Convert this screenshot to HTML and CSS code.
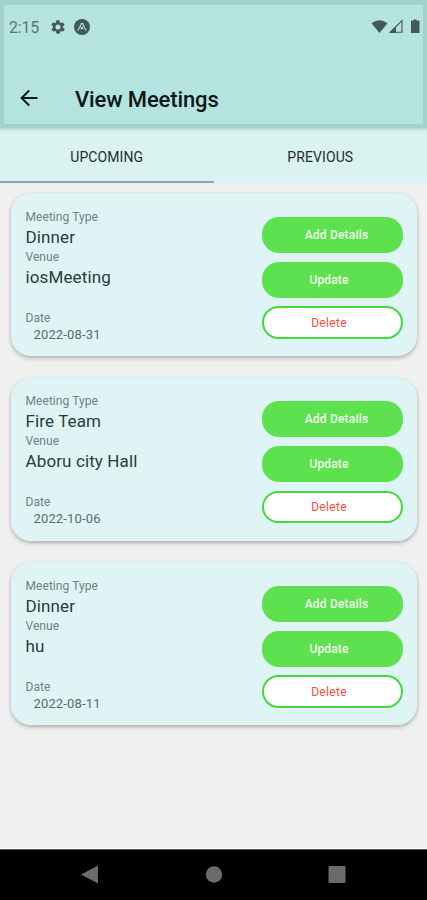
FILE: index.html
```html
<!DOCTYPE html>
<html lang="en">
<head>
<meta charset="utf-8">
<title>View Meetings</title>
<link rel="stylesheet" href="styles.css">
</head>
<body>
<div class="screen">
  <header class="header">
    <div class="status">
      <span class="clock">2:15</span>
      <svg class="gear" width="16" height="16" viewBox="0 0 24 24"><path fill-rule="evenodd" d="M19.4 13c0-.3.1-.7.1-1s0-.7-.1-1l2.100-1.600c.2-.2.3-.4.100-.7l-2-3.400c-.1-.2-.4-.3-.6-.2l-2.500 1c-.5-.4-1.100-.7-1.700-1l-.4-2.600c0-.3-.2-.5-.5-.5h-4c-.2 0-.5.2-.5.4l-.4 2.700c-.6.2-1.100.6-1.700 1l-2.500-1c-.2-.1-.5 0-.6.2l-2 3.400c-.1.200 0 .5.100.700L4.600 11c0 .3-.1.700-.1 1s0 .700.100 1l-2.100 1.600c-.2.200-.3.400-.1.700l2 3.400c.1.200.4.300.600.200l2.500-1c.5.400 1.100.700 1.700 1l.4 2.600c0 .3.200.500.500.500h4c.200 0 .500-.2.500-.4l.400-2.700c.6-.2 1.100-.6 1.700-1l2.500 1c.2.100.500 0 .600-.2l2-3.400c.1-.2 0-.500-.1-.700zM12 8.200a3.800 3.800 0 1 0 0 7.600 3.800 3.800 0 0 0 0-7.600z"/></svg>
      <svg class="expo" width="16" height="16" viewBox="0 0 16 16"><circle cx="8" cy="8" r="8"/><path d="M3.700 11.500Q6.300 8 7.300 4.700h1.400Q9.700 8 12.300 11.500M6.800 10.200Q7.700 9 8 7.800Q8.300 9 9.200 10.200" fill="none" stroke="#b5e3e0" stroke-width="1.200"/></svg>
      <svg class="signals" width="49" height="16" viewBox="0 0 49 16"><path d="M.5 4.200Q8.500-1.500 16.500 4.200L8.500 14z"/><path d="M31 1.500V13.300H19.200z" fill="none" stroke="#42585a" stroke-width="1.100"/><path d="M18.500 14 25 7.500V14z"/><path d="M40.500 1.500h2V.5h3v1H48q.5 0 .5.500v11.500q0 .5-.5.500h-7.500q-.5 0-.5-.5V2q0-.5.500-.5z"/></svg>
    </div>
    <div class="title-row">
      <svg class="back" width="18" height="18" viewBox="0 0 18 18"><path d="M17.500 9H2M9.200 1.500 1.600 9l7.600 7.500" fill="none" stroke="#0b1718" stroke-width="1.900"/></svg>
      <h1>View Meetings</h1>
    </div>
  </header>
  <nav class="tabs">
    <div class="tab active"><span>UPCOMING</span></div>
    <div class="tab"><span>PREVIOUS</span></div>
  </nav>
  <main class="list">
    <article class="card">
      <div class="info">
        <div class="label">Meeting Type</div><div class="value">Dinner</div>
        <div class="label">Venue</div><div class="value">iosMeeting</div>
        <div class="label date-label">Date</div><div class="date">2022-08-31</div>
      </div>
      <div class="actions">
        <button class="add">Add Details</button><button>Update</button><button class="delete">Delete</button>
      </div>
    </article>
    <article class="card">
      <div class="info">
        <div class="label">Meeting Type</div><div class="value">Fire Team</div>
        <div class="label">Venue</div><div class="value">Aboru city Hall</div>
        <div class="label date-label">Date</div><div class="date">2022-10-06</div>
      </div>
      <div class="actions">
        <button class="add">Add Details</button><button>Update</button><button class="delete">Delete</button>
      </div>
    </article>
    <article class="card">
      <div class="info">
        <div class="label">Meeting Type</div><div class="value">Dinner</div>
        <div class="label">Venue</div><div class="value">hu</div>
        <div class="label date-label">Date</div><div class="date">2022-08-11</div>
      </div>
      <div class="actions">
        <button class="add">Add Details</button><button>Update</button><button class="delete">Delete</button>
      </div>
    </article>
  </main>
  <footer class="navbar">
    <svg width="427" height="51" viewBox="0 0 427 51" fill="#6b6b6b"><path d="M81 25.500 98 16.500v18z"/><circle cx="214" cy="25.500" r="8.200"/><rect x="328.500" y="17" width="17" height="17" rx="1"/></svg>
  </footer>
</div>
</body>
</html>
```
FILE: styles.css
```css
* { box-sizing: border-box; }
body { margin: 0; font-family: Roboto, sans-serif; }
.screen { width: 427px; height: 900px; display: flex; flex-direction: column; background: #f0f0f0; overflow: hidden; }
.header {
  height: 128px; flex: none; background: #b5e3e0;
  border: 4px solid #a2d1ce; border-top-width: 5px;
  box-shadow: 0 1px 3px rgba(60, 110, 110, .35);
  z-index: 1;
}
.status { display: flex; align-items: center; height: 44px; padding-left: 5px; fill: #42585a; }
.clock { width: 41px; padding-top: 1px; font-size: 16px; letter-spacing: -.2px; color: #5b7475; }
.expo { margin-left: 8px; }
.signals { margin-left: auto; margin-right: 3px; }
.title-row { display: flex; align-items: center; height: 50px; margin-top: 24px; padding: 0 0 0 16px; }
h1 { margin: 4px 0 0 37px; font-size: 22px; line-height: 28px; font-weight: 500; letter-spacing: -.12px; color: #0b1718; }
.tabs { display: flex; height: 55px; flex: none; background: #daf2f0; }
.tab { flex: 1; display: flex; align-items: center; justify-content: center; padding-top: 4px; font-size: 14px; letter-spacing: .1px; color: #1d302b; border-bottom: 2px solid transparent; }
.active { border-bottom-color: #8fa5a4; }
.list { flex: 1; display: flex; flex-direction: column; gap: 21.500px; padding: 10.400px 10px 0 11px; }
.card {
  height: 163px; display: flex; justify-content: space-between;
  padding: 15.500px 14px 0; border-radius: 20px; background: #dff5f5;
  box-shadow: 0 2px 4px rgba(0, 0, 0, .28);
}
.info { padding-left: .5px; }
.label { height: 16px; font-size: 12px; line-height: 16px; letter-spacing: .06px; color: #6c8282; }
.value { height: 24px; font-size: 17px; line-height: 24px; letter-spacing: .12px; color: #263d3a; }
.date-label { margin-top: 21px; }
.date { padding-left: 8px; font-size: 13px; line-height: 17px; letter-spacing: .15px; color: #566d6c; }
.actions { display: flex; flex-direction: column; gap: 9px; width: 141px; padding-top: 8px; }
button {
  height: 36px; flex: none; padding: 0 7px 0 0; border: 0; border-radius: 17px; background: #5de14f;
  font: 500 12px/16px Roboto, sans-serif; letter-spacing: .1px; color: #f3fff0;
}
.add { padding: 0 0 0 8px; letter-spacing: .2px; }
.delete { height: 32.500px; margin-top: -.500px; border: 2px solid #46d83b; background: #fff; font-weight: 400; letter-spacing: .3px; color: #fa4c3a; }
.navbar { height: 51px; flex: none; background: #000; border-top: 1px solid #555; box-shadow: 0 -1px 0 #fff; }
.navbar svg { display: block; margin-top: -1px; }
```
